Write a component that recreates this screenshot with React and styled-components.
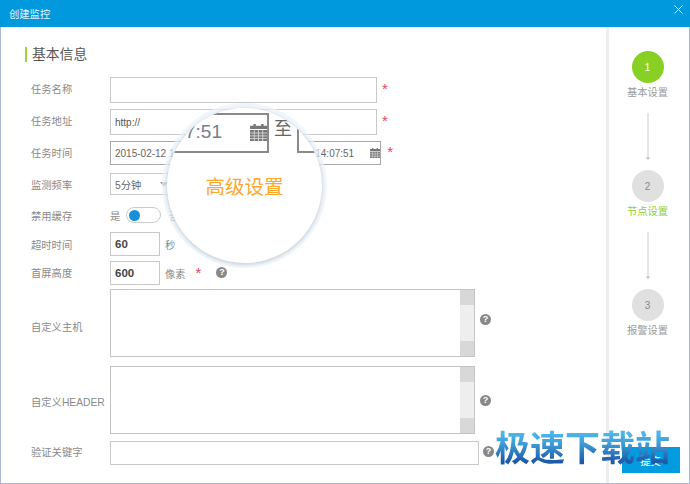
import React from 'react';
import styled, { createGlobalStyle } from 'styled-components';

const SANS = '"Liberation Sans", "Noto Sans CJK SC", sans-serif';

// shifts an item off the row's centre line without changing the row height
const lift = (props) => `${-(props.$lift || 0)}px`;
const drop = (props) => `${props.$lift || 0}px`;

const GlobalStyle = createGlobalStyle`
  html, body {
    margin: 0;
    padding: 0;
    background: #fff;
    overflow: hidden;
  }
  * {
    box-sizing: border-box;
  }
`;

const Dialog = styled.div`
  position: relative;
  display: flex;
  flex-flow: column;
  width: 690px;
  height: 484px;
  overflow: hidden;
  font-family: ${SANS};
  color: #888;
  background: #fff;
`;

const TitleBar = styled.header`
  display: flex;
  align-items: center;
  justify-content: space-between;
  flex: 0 0 27px;
  padding: 0 7px 0 9px;
  background: #0099de;
  color: #e4f4fc;
  font-size: 10.3px;
`;

const CloseButton = styled.span`
  display: flex;
  margin-top: -9px;
  color: #fff;
`;

const Body = styled.div`
  display: flex;
  flex: 1;
  min-height: 0;
  border-left: 1px solid #aeb5d2;
  border-right: 1px solid #aeb5d2;
  border-bottom: 1px solid #aeb5d2;
`;

const Main = styled.main`
  flex: 0 0 605px;
  padding: 20px 0 0 24px;
`;

const Heading = styled.h2`
  height: 15px;
  margin: 0 0 15px;
  padding-left: 5px;
  border-left: 2px solid #9bd63a;
  color: #555;
  font-size: 13.8px;
  font-weight: 400;
  line-height: 15px;
`;

const Form = styled.div`
  display: flex;
  flex-flow: column;
  margin-left: 6px;
`;

const Row = styled.div`
  display: flex;
  align-items: center;
  height: ${(props) => props.$height}px;
  margin-top: ${(props) => props.$top || 0}px;
`;

const Label = styled.label`
  flex: 0 0 79px;
  margin-top: ${lift};
  margin-bottom: ${drop};
  font-size: 10.3px;
  white-space: nowrap;
  color: #8a8a8a;
`;

const Field = styled.div`
  display: flex;
  align-items: center;
  justify-content: space-between;
  flex: 0 0 ${(props) => props.$width}px;
  height: 100%;
  padding: 0 ${(props) => props.$padRight ?? 4}px 0 4px;
  border: 1px solid ${(props) => (props.$dark ? '#a8a8a8' : '#c8c8c8')};
  background: #fff;
  color: ${(props) => props.$color || '#666'};
  font-size: ${(props) => props.$size || 10}px;
  font-weight: ${(props) => props.$weight || 400};
`;

const Caret = styled.span`
  width: 0;
  height: 0;
  margin-right: 5px;
  border-left: 4px solid transparent;
  border-right: 4px solid transparent;
  border-top: 5px solid #999;
`;

const Star = styled.span`
  margin-left: ${(props) => props.$left}px;
  margin-top: ${lift};
  margin-bottom: ${drop};
  color: #e8455a;
  font-size: 15px;
  line-height: 1;
`;

const Help = styled.span`
  display: inline-flex;
  align-items: center;
  justify-content: center;
  width: 11px;
  height: 11px;
  margin-left: ${(props) => props.$left}px;
  margin-top: ${lift};
  margin-bottom: ${drop};
  border-radius: 50%;
  background: #888;
  color: #fff;
  font-size: 9px;
  font-weight: 700;
`;

const Unit = styled.span`
  margin-left: ${(props) => props.$left}px;
  margin-right: ${(props) => props.$right || 0}px;
  font-size: 10.3px;
  color: #8a8a8a;
`;

const Toggle = styled.span`
  display: flex;
  align-items: center;
  width: 35px;
  height: 16px;
  margin-left: 6px;
  padding-left: 2px;
  border: 1px solid #ccc;
  border-radius: 8px;
`;

const ToggleKnob = styled.span`
  width: 11px;
  height: 11px;
  border-radius: 50%;
  background: #1a8fd8;
`;

const TextArea = styled.div`
  display: flex;
  justify-content: flex-end;
  flex: 0 0 365px;
  height: 100%;
  border: 1px solid #c4c4c4;
`;

const ScrollBar = styled.div`
  display: flex;
  flex-flow: column;
  justify-content: space-between;
  width: 14px;
  background: #eeeeee;
`;

const ScrollCap = styled.span`
  height: 15px;
  background: #d8d8d8;
`;

const SidePanel = styled.aside`
  display: flex;
  flex-flow: column;
  align-items: center;
  flex: 1;
  padding: 24px 3px 10px 0;
  border-left: 3px solid #eeeeee;
`;

const StepCircle = styled.span`
  display: flex;
  align-items: center;
  justify-content: center;
  width: 32px;
  height: 32px;
  border-radius: 50%;
  background: ${(props) => (props.$active ? '#88d024' : '#e0e0e0')};
  color: ${(props) => (props.$active ? '#fff' : '#888')};
  font-size: 10px;
`;

const StepLabel = styled.span`
  margin-top: 3px;
  height: 13px;
  line-height: 13px;
  font-size: 10.3px;
  color: ${(props) => (props.$green ? '#8ed22e' : '#999')};
`;

const StepArrow = styled.svg`
  display: block;
  margin: 14px 0 9px;
`;

const SubmitButton = styled.button`
  width: 58px;
  height: 26px;
  margin-top: auto;
  margin-left: 6px;
  border: 0;
  background: #009cdf;
  color: #fff;
  font-family: ${SANS};
  font-size: 10.3px;
`;

const Magnifier = styled.div`
  position: absolute;
  top: 108px;
  left: 167px;
  width: 155px;
  height: 155px;
  overflow: hidden;
  border-radius: 50%;
  background: #fff;
  box-shadow: 0 1px 3px 1px rgba(0, 0, 0, 0.13), 0 0 0 5px rgba(232, 243, 251, 0.7);
`;

const ZoomRow = styled.div`
  display: flex;
  height: 40px;
  margin: 5px 0 0 -19px;
`;

const ZoomField = styled.div`
  display: flex;
  align-items: center;
  justify-content: flex-end;
  flex: 0 0 121px;
  gap: 28px;
  padding-bottom: 2px;
  border: 2px solid #8a8a8a;
  border-left: 0;
  color: #778088;
  font-size: 19px;
`;

const ZoomTo = styled.span`
  flex: 0 0 28px;
  height: 32px;
  text-align: center;
  color: #666;
  font-size: 18px;
  line-height: 32px;
`;

const ZoomFieldNext = styled.div`
  flex: 0 0 60px;
  border: 2px solid #8a8a8a;
`;

const ZoomTitle = styled.div`
  margin-top: 24px;
  text-align: center;
  color: #ffa62e;
  font-size: 19.5px;
  line-height: 20px;
`;

const Watermark = styled.div`
  position: absolute;
  left: 495px;
  top: 424px;
  font-family: "Noto Sans CJK SC", sans-serif;
  font-size: 35px;
  font-weight: 700;
  line-height: 44px;
  white-space: nowrap;
  background: linear-gradient(#4fb8ea 20%, #3f9bd6 45%, #1f5aa8 85%);
  -webkit-background-clip: text;
  background-clip: text;
  color: transparent;
`;

const CalendarIcon = ({ size = 10 }) => (
  <svg width={size} height={size} viewBox="0 0 10 10" fill="#777">
    <path d="M2 0h1.400v1H6.600V0H8v1h2v2H0V1h2z" />
    <path d="M0 3.600h10V10H0z" />
    <path d="M0 5.300h10M0 7h10M0 8.600h10M2.500 3.600V10M5 3.600V10M7.500 3.600V10" stroke="#ddd" strokeWidth=".5" />
  </svg>
);

const StepLine = () => (
  <StepArrow width="6" height="48" viewBox="0 0 6 48">
    <path d="M3 0v45" stroke="#ccc" />
    <path d="M1 44.500h4L3 47z" fill="#bbb" />
  </StepArrow>
);

const App = () => {
  return (
    <Dialog>
      <GlobalStyle />
      <TitleBar>
        创建监控
        <CloseButton>
          <svg width="9" height="9" viewBox="0 0 9 9" stroke="currentColor" strokeWidth="1" fill="none">
            <path d="M.5.5l8 8M8.500.5l-8 8" />
          </svg>
        </CloseButton>
      </TitleBar>
      <Body>
        <Main>
          <Heading>基本信息</Heading>
          <Form>
            <Row $height={26}>
              <Label $lift={2}>任务名称</Label>
              <Field $width={267} />
              <Star $left={5} $lift={2}>*</Star>
            </Row>
            <Row $height={26} $top={6}>
              <Label $lift={2}>任务地址</Label>
              <Field $width={267} $color="#555">http://</Field>
              <Star $left={5} $lift={2}>*</Star>
            </Row>
            <Row $height={24} $top={6}>
              <Label $lift={1}>任务时间</Label>
              <Field $width={125} $dark $padRight={0}>2015-02-12 14:07:51<CalendarIcon /></Field>
              <Unit $left={6} $right={5}>至</Unit>
              <Field $width={125} $dark $padRight={0}>2015-02-12 14:07:51<CalendarIcon /></Field>
              <Star $left={6} $lift={2}>*</Star>
            </Row>
            <Row $height={22} $top={8}>
              <Label>监测频率</Label>
              <Field $width={68} $size={10.3}>5分钟<Caret /></Field>
            </Row>
            <Row $height={16} $top={12}>
              <Label>禁用缓存</Label>
              <Unit $left={0}>是</Unit>
              <Toggle><ToggleKnob /></Toggle>
              <Unit $left={8}>否</Unit>
            </Row>
            <Row $height={24} $top={9}>
              <Label>超时时间</Label>
              <Field $width={50} $color="#444" $size={11.5} $weight={700}>60</Field>
              <Unit $left={5}>秒</Unit>
            </Row>
            <Row $height={24} $top={5}>
              <Label $lift={1}>首屏高度</Label>
              <Field $width={50} $color="#444" $size={11.5} $weight={700}>600</Field>
              <Unit $left={5}>像素</Unit>
              <Star $left={10} $lift={1}>*</Star>
              <Help $left={15} $lift={1}>?</Help>
            </Row>
            <Row $height={68} $top={4}>
              <Label $lift={-3}>自定义主机</Label>
              <TextArea>
                <ScrollBar><ScrollCap /><ScrollCap /></ScrollBar>
              </TextArea>
              <Help $left={5} $lift={4}>?</Help>
            </Row>
            <Row $height={68} $top={9}>
              <Label $lift={-1}>自定义HEADER</Label>
              <TextArea>
                <ScrollBar><ScrollCap /><ScrollCap /></ScrollBar>
              </TextArea>
              <Help $left={5}>?</Help>
            </Row>
            <Row $height={24} $top={7}>
              <Label $lift={2}>验证关键字</Label>
              <Field $width={369} />
              <Help $left={4} $lift={2}>?</Help>
            </Row>
          </Form>
        </Main>
        <SidePanel>
          <StepCircle $active>1</StepCircle>
          <StepLabel>基本设置</StepLabel>
          <StepLine />
          <StepCircle>2</StepCircle>
          <StepLabel $green>节点设置</StepLabel>
          <StepLine />
          <StepCircle>3</StepCircle>
          <StepLabel>报警设置</StepLabel>
          <SubmitButton>提交</SubmitButton>
        </SidePanel>
      </Body>
      <Magnifier>
        <ZoomRow>
          <ZoomField>
            07:51
            <CalendarIcon size={17} />
          </ZoomField>
          <ZoomTo>至</ZoomTo>
          <ZoomFieldNext />
        </ZoomRow>
        <ZoomTitle>高级设置</ZoomTitle>
      </Magnifier>
      <Watermark>极速下载站</Watermark>
    </Dialog>
  );
};

export default App;
